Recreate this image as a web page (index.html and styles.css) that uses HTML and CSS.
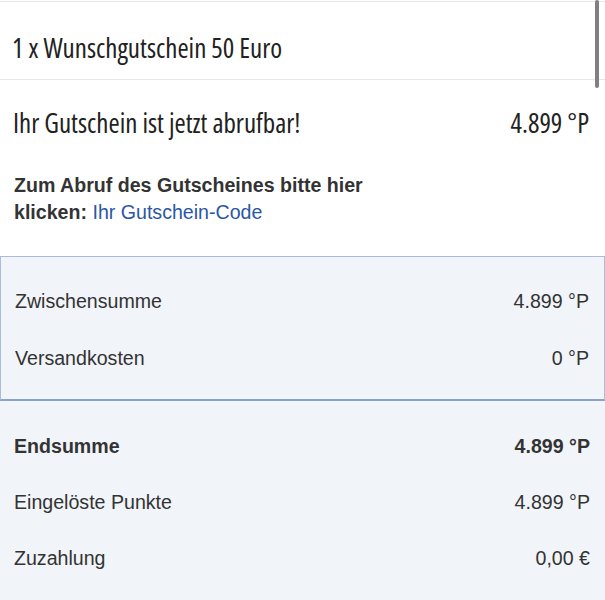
FILE: index.html
```html
<!DOCTYPE html>
<html>
<head>
<meta charset="utf-8"/>
<title>Bestellung</title>
<link rel="stylesheet" href="styles.css">
</head>
<body>
<main>
	<div class="item">1 x Wunschgutschein 50 Euro</div>
	<div class="status">
		<span>Ihr Gutschein ist jetzt abrufbar!</span>
		<span>4.899 °P</span>
	</div>
	<p class="note">
		<strong>Zum Abruf des Gutscheines bitte hier</strong><br>
		<strong>klicken:</strong> <a href="#">Ihr Gutschein-Code</a>
	</p>
	<div class="summary">
		<div class="row"><span>Zwischensumme</span><span>4.899 °P</span></div>
		<div class="row"><span>Versandkosten</span><span>0 °P</span></div>
	</div>
	<div class="totals">
		<div class="row total"><span>Endsumme</span><span>4.899 °P</span></div>
		<div class="row"><span>Eingelöste Punkte</span><span>4.899 °P</span></div>
		<div class="row"><span>Zuzahlung</span><span>0,00 €</span></div>
	</div>
</main>
<div class="scrollbar"></div>
</body>
</html>
```
FILE: styles.css
```css
body {
	margin: 0;
	background-color: #fff;
	color: #333;
	font-family: "Liberation Sans", Arial, sans-serif;
}
main {
	padding-top: 1px;
}
.item {
	height: 63px;
	border-top: 1px solid #e8e8e8;
	border-bottom: 1px solid #e8e8e8;
	padding: 14px 14px 0 12px;
	display: flex;
	align-items: center;
	font-family: "Open Sans", sans-serif;
	font-stretch: 80%;
	font-size: 27px;
	color: #222;
}
.status {
	display: flex;
	justify-content: space-between;
	padding: 28px 16px 0 13px;
	line-height: 30px;
	font-family: "Open Sans", sans-serif;
	font-stretch: 80%;
	font-size: 27px;
	color: #222;
}
.note {
	margin: 34px 0 0;
	padding: 0 14px;
	font-size: 19.6px;
	line-height: 27px;
}
.note a {
	color: #2a56a6;
	text-decoration: none;
}
.summary {
	margin-top: 30px;
	background-color: #f1f4f9;
	border: 1px solid #aabcda;
	border-bottom: 2px solid #8aa2c8;
	padding: 16px 0 12px;
}
.totals {
	background-color: #f1f4f9;
	padding: 17px 0 20px;
}
.row {
	display: flex;
	justify-content: space-between;
	height: 57px;
	align-items: center;
	padding: 0 15px 0 14px;
	font-size: 19.6px;
}
.totals .row {
	height: 56px;
}
.total {
	font-weight: bold;
}
.scrollbar {
	position: absolute;
	top: 0;
	right: 6px;
	width: 4px;
	height: 88px;
	border-radius: 2px;
	background-color: #808080;
}
```
